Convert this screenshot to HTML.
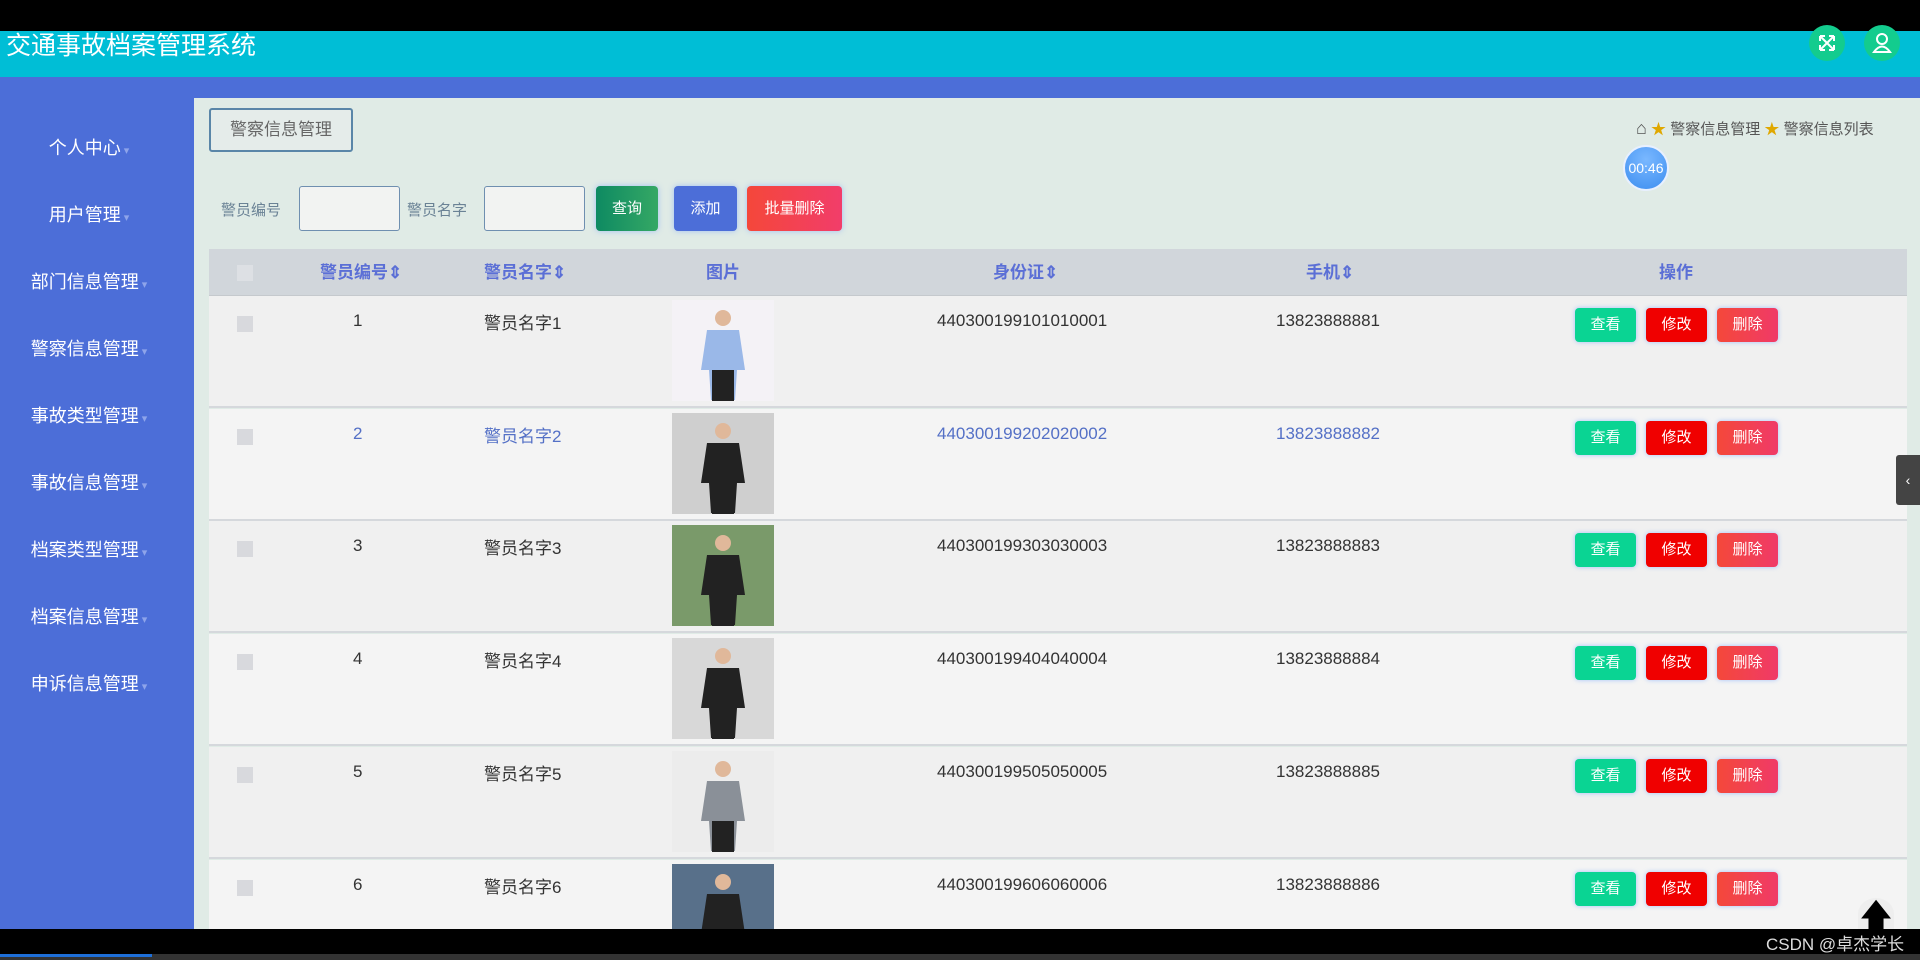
<!DOCTYPE html>
<html style="overflow:hidden;height:960px"><head><meta charset="utf-8"><style>
*{margin:0;padding:0;box-sizing:border-box}
body{width:1920px;height:960px;overflow:hidden;background:#000;font-family:"Liberation Sans","Noto Sans CJK SC",sans-serif;position:relative}
.abs{position:absolute}
.hdr{left:0;top:31px;width:1920px;height:46px;background:#00bed6}
.band{left:0;top:77px;width:1920px;height:21px;background:#4c6ed8}
.side{left:0;top:98px;width:194px;height:831px;background:#4c6ed8}
.side div{position:absolute;left:-8px;width:194px;text-align:center;color:#fff;font-size:18px}
.side div:after{content:"▾";font-size:11px;color:#8ea4ea;margin-left:3px}
.main{left:194px;top:98px;width:1726px;height:831px;background:#e0ebe6}
.btn{position:absolute;color:#fff;font-size:15px;text-align:center;border-radius:4px;box-shadow:0 0 6px rgba(100,150,255,.5)}
.inp{position:absolute;top:186px;width:101px;height:45px;border:1px solid #6f8fb0;border-radius:3px;background:#f2f3f2}
.lbl{position:absolute;top:199px;color:#6a8295;font-size:15px}
.th{position:absolute;top:258px;color:#5b6fd6;font-size:17px;font-weight:bold}
.row{position:absolute;left:209px;width:1698px;height:112px;border-bottom:2px solid #d5d8dc}
.c{position:absolute;top:15px;font-size:17px;color:#333}
.cb{position:absolute;left:28px;top:20px;width:16px;height:16px;background:#d8d9dd}
.img{position:absolute;left:463px;top:4px;width:102px;height:101px}
.ab{position:absolute;top:12px;width:61px;height:34px;line-height:34px;color:#fff;font-size:15px;text-align:center;border-radius:4px;box-shadow:0 0 5px rgba(110,160,255,.6)}
</style></head><body>
<div class="abs hdr"><div class="abs" style="left:6px;top:0;color:#fff;font-size:25px;line-height:30px">交通事故档案管理系统</div>
<div class="abs" style="left:1809px;top:-6px;width:36px;height:36px;border-radius:50%;background:#13cc8e"><svg width="36" height="36"><path d="M11 11l14 14M25 11L11 25M11 11h5M11 11v5M25 11h-5M25 11v5M11 25h5M11 25v-5M25 25h-5M25 25v-5" stroke="#fff" stroke-width="2" fill="none"/></svg></div>
<div class="abs" style="left:1864px;top:-6px;width:36px;height:36px;border-radius:50%;background:#13cc8e"><svg width="36" height="36"><circle cx="18" cy="14" r="5" fill="none" stroke="#fff" stroke-width="2"/><path d="M10 27 Q18 16 26 27 Z" fill="none" stroke="#fff" stroke-width="2"/></svg></div>
</div>
<div class="abs band"></div>
<div class="abs side">
<div style="top:36px">个人中心</div><div style="top:103px">用户管理</div><div style="top:170px">部门信息管理</div><div style="top:237px">警察信息管理</div><div style="top:304px">事故类型管理</div><div style="top:371px">事故信息管理</div><div style="top:438px">档案类型管理</div><div style="top:505px">档案信息管理</div><div style="top:572px">申诉信息管理</div>
</div>
<div class="abs main"></div>
<div class="abs" style="left:209px;top:108px;width:144px;height:44px;border:2px solid #5a86a8;border-radius:3px;color:#666;font-size:17px;text-align:center;line-height:40px;background:#e5ecea">警察信息管理</div>
<div class="abs" style="left:1636px;top:118px;font-size:15px;color:#555"><span style="font-size:18px">⌂</span> <span style="color:#e0a800">★</span> 警察信息管理 <span style="color:#e0a800">★</span> 警察信息列表</div>
<div class="abs" style="left:1623px;top:145px;width:46px;height:46px;border-radius:50%;background:radial-gradient(circle at 50% 30%,#7ab8ff,#3d8ef0);border:2px solid #e8f0ff;color:#fff;font-size:14px;text-align:center;line-height:42px">00:46</div>
<div class="lbl" style="left:221px">警员编号</div><div class="inp" style="left:299px"></div>
<div class="lbl" style="left:407px">警员名字</div><div class="inp" style="left:484px"></div>
<div class="btn" style="left:596px;top:186px;width:62px;height:45px;line-height:45px;background:linear-gradient(90deg,#0e8a62,#35a865)">查询</div>
<div class="btn" style="left:674px;top:186px;width:63px;height:45px;line-height:45px;background:#4c6ed8">添加</div>
<div class="btn" style="left:747px;top:186px;width:95px;height:45px;line-height:45px;background:linear-gradient(90deg,#f4473a,#f23d6a)">批量删除</div>
<div class="abs" style="left:209px;top:249px;width:1698px;height:47px;background:#d1d6db;border-bottom:1px solid #c5c9cd"></div>
<div class="abs" style="left:237px;top:265px;width:16px;height:16px;background:#dde0e4"></div>
<div class="th" style="left:320px">警员编号⇕</div><div class="th" style="left:484px">警员名字⇕</div><div class="th" style="left:706px">图片</div><div class="th" style="left:993px">身份证⇕</div><div class="th" style="left:1306px">手机⇕</div><div class="th" style="left:1659px">操作</div>
<div id="rows"></div>
<div class="abs" style="left:1896px;top:455px;width:24px;height:50px;background:#444;border-radius:3px 0 0 3px;color:#fff;text-align:center;line-height:50px;font-size:14px">‹</div>
<div class="abs" style="left:1858px;top:898px;width:36px;height:32px;background:#eee;border-radius:50% 50% 0 0;color:#000;font-size:30px;text-align:center;line-height:36px;font-weight:bold">🡅</div>
<div class="abs" style="left:0;top:929px;width:1920px;height:31px;background:#000"></div>
<div class="abs" style="left:0;top:954px;width:1920px;height:6px;background:#333"></div>
<div class="abs" style="left:0;top:954px;width:152px;height:3px;background:#1e6fd8"></div>
<div class="abs" style="left:1766px;top:930px;color:#ddd;font-size:17px">CSDN @卓杰学长</div>
<script>
var h='';var bg=['#f4f2f6','#cfcfcf','#7a9a6a','#d8d8d8','#ececec','#58708a'];
for(var i=0;i<6;i++){var n=i+1,t=296+i*112.7,c=i==1?'#5470c6':'#333',b=i%2?'#f4f4f4':'#f0f0f0';
h+='<div class="row" style="top:'+t+'px;background:'+b+'"><div class="cb"></div>'+
'<div class="c" style="left:144px;color:'+c+'">'+n+'</div>'+
'<div class="c" style="left:275px;top:13px;color:'+c+'">警员名字'+n+'</div>'+
'<div class="img" style="background:'+bg[i]+'"><svg width="102" height="101"><circle cx="51" cy="18" r="8" fill="#e0b89a"/><path d="M35 30 h32 l6 40 h-8 l-2 30 h-24 l-2 -30 h-8z" fill="'+(i==0?'#9ab8e8':i==4?'#8a9098':'#222')+'"/><rect x="40" y="70" width="22" height="31" fill="#222"/></svg></div>'+
'<div class="c" style="left:728px;color:'+c+'">440300199'+n+'0'+n+'0'+n+'000'+n+'</div>'+
'<div class="c" style="left:1067px;color:'+c+'">1382388888'+n+'</div>'+
'<div class="ab" style="left:1366px;background:#0ad493">查看</div><div class="ab" style="left:1437px;background:#f00000">修改</div><div class="ab" style="left:1508px;background:linear-gradient(90deg,#f4483a,#f03a68)">删除</div></div>';}
document.getElementById('rows').innerHTML=h;
</script>
</body></html>
